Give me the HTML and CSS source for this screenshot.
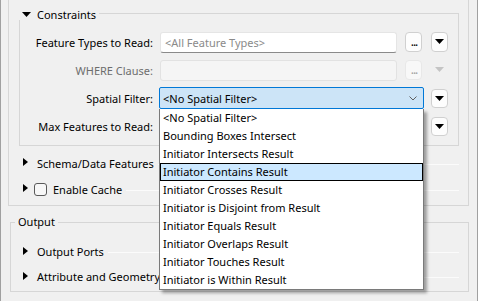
FILE: index.html
```html
<!DOCTYPE html>
<html lang="en">
<head>
  <meta charset="UTF-8">
  <meta name="viewport" content="width=device-width, initial-scale=1.0">
  <title>Reader Parameters</title>
  <link rel="stylesheet" href="styles.css">
</head>
<body>
  <div class="frame">
    <div class="group">
      <!-- Constraints section -->
      <div class="section">
        <div class="section-head">
          <svg class="tri-down" width="9" height="5" viewBox="0 0 9 5"><polygon points="0,0 9,0 4.5,5"/></svg>
          <span class="section-title">Constraints</span>
          <span class="head-line"></span>
        </div>
        <div class="section-body">
          <div class="row">
            <span class="label">Feature Types to Read:</span>
            <div class="text-input"><span class="placeholder">&lt;All Feature Types&gt;</span></div>
            <button class="dots">...</button>
            <button class="drop"><svg width="9" height="5" viewBox="0 0 9 5"><polygon points="0,0 9,0 4.5,5"/></svg></button>
          </div>
          <div class="row">
            <span class="label disabled">WHERE Clause:</span>
            <div class="text-input off"></div>
            <button class="dots off">...</button>
            <button class="drop off"><svg width="9" height="5" viewBox="0 0 9 5"><polygon points="0,0 9,0 4.5,5"/></svg></button>
          </div>
          <div class="row">
            <span class="label">Spatial Filter:</span>
            <div class="combo-wrap">
              <div class="combo">
                <span>&lt;No Spatial Filter&gt;</span>
                <svg class="chevron" width="8" height="5" viewBox="0 0 8 5"><polyline points="0.5,0.5 4,4 7.5,0.5"/></svg>
              </div>
              <!-- open popup list -->
              <ul class="list">
                <li>&lt;No Spatial Filter&gt;</li>
                <li>Bounding Boxes Intersect</li>
                <li>Initiator Intersects Result</li>
                <li class="current">Initiator Contains Result</li>
                <li>Initiator Crosses Result</li>
                <li>Initiator is Disjoint from Result</li>
                <li>Initiator Equals Result</li>
                <li>Initiator Overlaps Result</li>
                <li>Initiator Touches Result</li>
                <li>Initiator is Within Result</li>
              </ul>
            </div>
            <button class="drop near"><svg width="9" height="5" viewBox="0 0 9 5"><polygon points="0,0 9,0 4.5,5"/></svg></button>
          </div>
          <div class="row">
            <span class="label">Max Features to Read:</span>
            <div class="text-input wide"></div>
            <button class="drop near"><svg width="9" height="5" viewBox="0 0 9 5"><polygon points="0,0 9,0 4.5,5"/></svg></button>
          </div>
        </div>
      </div>

      <div class="fold-row first">
        <svg class="tri-right" width="5" height="8" viewBox="0 0 5 8"><polygon points="0,0 5,4 0,8"/></svg>
        <span class="fold-title">Schema/Data Features</span>
        <span class="fold-line"></span>
      </div>
      <div class="fold-row">
        <svg class="tri-right" width="5" height="8" viewBox="0 0 5 8"><polygon points="0,0 5,4 0,8"/></svg>
        <span class="check"></span>
        <span class="fold-title">Enable Cache</span>
        <span class="fold-line"></span>
      </div>
    </div>

    <fieldset class="output">
      <legend>Output</legend>
      <div class="fold-row first">
        <svg class="tri-right" width="5" height="8" viewBox="0 0 5 8"><polygon points="0,0 5,4 0,8"/></svg>
        <span class="fold-title">Output Ports</span>
        <span class="fold-line"></span>
      </div>
      <div class="fold-row">
        <svg class="tri-right" width="5" height="8" viewBox="0 0 5 8"><polygon points="0,0 5,4 0,8"/></svg>
        <span class="fold-title">Attribute and Geometry Handling</span>
        <span class="fold-line"></span>
      </div>
    </fieldset>
  </div>
</body>
</html>
```

FILE: styles.css
```css
/* General */
* {
  box-sizing: border-box;
}

body {
  margin: 0;
  background: #f0f0f0;
  font-family: 'Noto Sans', 'Open Sans', sans-serif;
  font-size: 11px;
  color: #000;
  overflow: hidden;
}

.frame {
  width: 478px;
  height: 301px;
  border-left: 1px solid #a0a0a0;
  border-right: 1px solid #a0a0a0;
  overflow: hidden;
}

/* Outer group */
.group {
  margin-left: 7px;
  width: 461px;
  border-left: 1px solid #d6d6d6;
  border-right: 1px solid #d6d6d6;
  border-bottom: 1px solid #d6d6d6;
  padding: 8px 9px 3px 0;
}

.section {
  margin-left: 10px;
}

.section-head {
  display: flex;
  align-items: center;
  height: 12px;
  padding-left: 3px;
  line-height: 12px;
  font-size: 12px;
}

.tri-down {
  fill: #000;
  margin-top: 0;
}

.section-title {
  margin-left: 6px;
  font-size: 11px;
  margin-top: 2px;
}

.head-line {
  flex: 1;
  align-self: flex-end;
  height: 7px;
  margin-left: 3px;
  border-top: 1px solid #d6d6d6;
  border-right: 1px solid #d6d6d6;
}

.section-body {
  border-left: 1px solid #d6d6d6;
  border-right: 1px solid #d6d6d6;
  border-bottom: 1px solid #d6d6d6;
  padding: 11px 10px 8px 0;
  display: flex;
  flex-direction: column;
  gap: 6px;
}

.row {
  display: flex;
  align-items: center;
  height: 22px;
}

.label {
  width: 133px;
  margin-right: 7px;
  text-align: right;
  white-space: nowrap;
}

.label.disabled {
  color: #6d6d6d;
}

.text-input {
  width: 237px;
  height: 21px;
  background: #fff;
  border: 1px solid #e5e5e5;
  border-bottom-color: #8a8a8a;
  border-radius: 3px;
  padding-left: 4px;
  line-height: 19px;
}

.text-input.off {
  background: #f5f5f5;
  border-color: #e2e2e2;
}

.text-input.wide {
  width: 265px;
  margin-left: -1px;
}

.placeholder {
  color: #8a8a8a;
}

/* Buttons */
button {
  font: inherit;
  padding: 0;
  margin: 0;
  cursor: pointer;
}

.dots {
  width: 17px;
  height: 20px;
  margin-left: 8px;
  background: #fdfdfd;
  border: 1px solid #d0d0d0;
  border-radius: 4px;
  line-height: 14px;
  font-size: 12px;
  letter-spacing: -1px;
  padding-left: 1px;
  color: #000;
}

.dots.off {
  border-color: #e8e8e8;
  background: #f8f8f8;
  color: #a0a0a0;
}

.drop {
  width: 17px;
  height: 20px;
  margin-left: 9px;
  background: #fdfdfd;
  border: 1px solid #d0d0d0;
  border-radius: 4px;
  display: flex;
  justify-content: center;
  align-items: flex-start;
  padding-top: 6px;
}

.drop svg {
  fill: #000;
}

.drop.off {
  background: transparent;
  border-color: transparent;
}

.drop.off svg {
  fill: #c4c4c4;
}

.drop.near {
  margin-left: 7px;
  height: 19px;
  padding-top: 6px;
}

/* Combo box with open list */
.combo-wrap {
  position: relative;
  margin-left: -1px;
}

.combo {
  width: 265px;
  height: 22px;
  background: #cce4f7;
  border: 1px solid #0078d7;
  border-radius: 2px;
  display: flex;
  align-items: center;
  justify-content: space-between;
  padding: 0 6px 0 3px;
}

.chevron {
  fill: none;
  stroke: #606060;
  stroke-width: 1;
}

.list {
  position: absolute;
  top: 22px;
  left: 0;
  width: 265px;
  margin: 0;
  padding: 0;
  list-style: none;
  background: #fff;
  border: 1px solid #7a7a7a;
  border-top: none;
  box-shadow: 3px 3px 3px rgba(0, 0, 0, 0.35);
  z-index: 10;
}

.list li {
  height: 18px;
  line-height: 18px;
  padding-left: 3px;
  white-space: nowrap;
}

.list li.current {
  background: #cce8ff;
  border: 1px solid #000;
  line-height: 16px;
  padding-left: 2px;
}

/* Collapsible rows */
.fold-row {
  display: flex;
  align-items: center;
  height: 26px;
  padding-left: 14px;
  white-space: nowrap;
}

.fold-row.first {
  margin-top: 4px;
}

.tri-right {
  fill: #000;
  flex: none;
  margin-right: 9px;
  margin-top: -2px;
}

.check {
  width: 13px;
  height: 13px;
  border: 1px solid #5a5a5a;
  border-radius: 3px;
  background: #f7f7f7;
  margin-left: -3px;
  margin-right: 6px;
}

.fold-line {
  flex: 1;
  height: 1px;
  margin-left: 4px;
  background: #fbfbfb;
  margin-top: 2px;
}

/* Output group */
.output {
  margin: 9px 0 0 9px;
  width: 459px;
  padding: 0 9px 2px 0;
  border: 1px solid #d6d6d6;
  min-inline-size: 0;
}

.output legend {
  margin-left: 4px;
  padding: 0 3px;
  line-height: 14px;
}

.output .fold-row {
  height: 25px;
  padding-left: 12px;
}

.output .fold-row.first {
  margin-top: 10px;
}
```
